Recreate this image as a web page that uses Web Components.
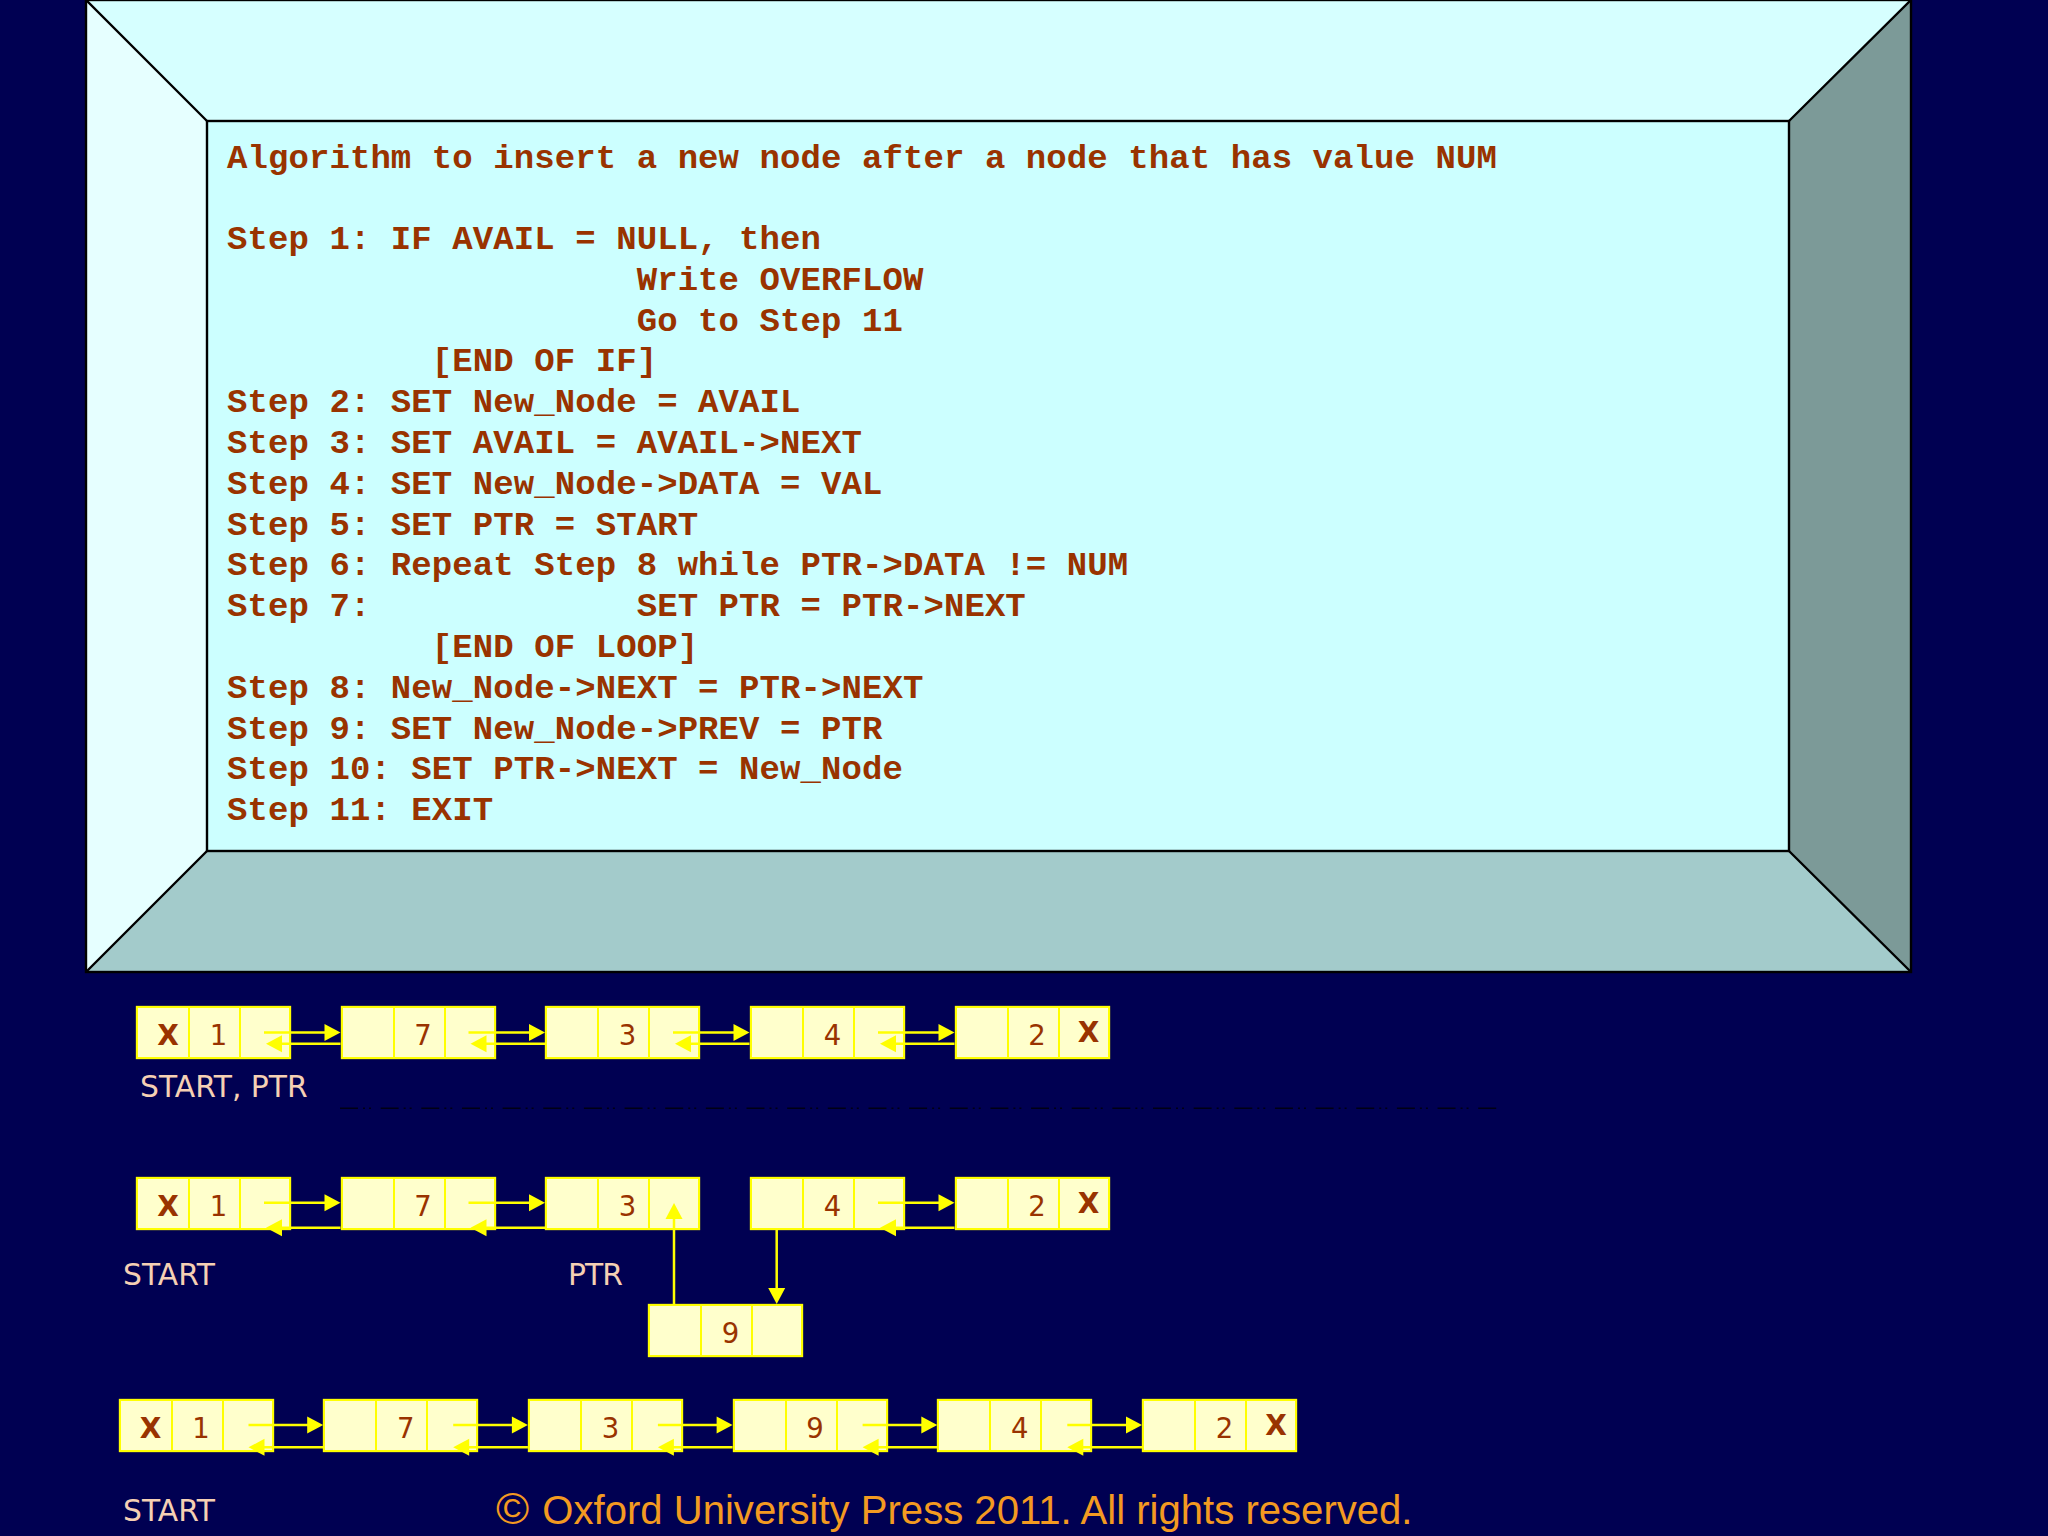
<!DOCTYPE html>
<html>
<head>
<meta charset="utf-8">
<title>Insert after a node</title>
<style>
  html, body { margin: 0; padding: 0; background: #000052; }
  body { width: 2048px; height: 1536px; overflow: hidden; }
</style>
</head>
<body>
<slide-page>
  <bevel-frame>
    <algo-listing>Algorithm to insert a new node after a node that has value NUM

Step 1: IF AVAIL = NULL, then
                    Write OVERFLOW
                    Go to Step 11
          [END OF IF]
Step 2: SET New_Node = AVAIL
Step 3: SET AVAIL = AVAIL-&gt;NEXT
Step 4: SET New_Node-&gt;DATA = VAL
Step 5: SET PTR = START
Step 6: Repeat Step 8 while PTR-&gt;DATA != NUM
Step 7:             SET PTR = PTR-&gt;NEXT
          [END OF LOOP]
Step 8: New_Node-&gt;NEXT = PTR-&gt;NEXT
Step 9: SET New_Node-&gt;PREV = PTR
Step 10: SET PTR-&gt;NEXT = New_Node
Step 11: EXIT</algo-listing>
  </bevel-frame>
  <list-diagram>
    <list-node x="136" y="34" val="1" left="X"></list-node>
    <list-node x="340.5" y="34" val="7"></list-node>
    <list-node x="545" y="34" val="3"></list-node>
    <list-node x="750" y="34" val="4"></list-node>
    <list-node x="954.5" y="34" val="2" right="X"></list-node>
    <diagram-label x="140" y="125.7">START, PTR</diagram-label>

    <list-node x="136" y="205" val="1" left="X"></list-node>
    <list-node x="340.5" y="205" val="7"></list-node>
    <list-node x="545" y="205" val="3"></list-node>
    <list-node x="750" y="205" val="4"></list-node>
    <list-node x="954.5" y="205" val="2" right="X"></list-node>
    <diagram-label x="123" y="313.6">START</diagram-label>
    <diagram-label x="568" y="313.6" style="letter-spacing:-1px">PTR</diagram-label>
    <list-node x="648" y="332" val="9"></list-node>

    <list-node x="118.5" y="427" val="1" left="X"></list-node>
    <list-node x="323.2" y="427" val="7"></list-node>
    <list-node x="527.9" y="427" val="3"></list-node>
    <list-node x="732.6" y="427" val="9"></list-node>
    <list-node x="937.3" y="427" val="4"></list-node>
    <list-node x="1142" y="427" val="2" right="X"></list-node>
    <diagram-label x="123" y="549">START</diagram-label>
    <copyright-note x="496" y="551.7"><span style="font-size:45px;line-height:0;margin-right:2px">©</span> Oxford University Press 2011. All rights reserved.</copyright-note>
  </list-diagram>
</slide-page>

<script>
class SlidePage extends HTMLElement {
  connectedCallback() {
    const root = this.attachShadow({ mode: "open" });
    root.innerHTML = `
      <style>
        :host { display: flex; flex-direction: column; width: 2048px; height: 1536px; }
      </style>
      <slot></slot>`;
  }
}

class BevelFrame extends HTMLElement {
  connectedCallback() {
    const root = this.attachShadow({ mode: "open" });
    root.innerHTML = `
      <style>
        :host {
          display: block;
          position: relative;
          box-sizing: border-box;
          width: 1825px;
          height: 972px;
          margin-left: 86px;
          padding: 138.5px 0 0 141px;
          flex: none;
        }
        svg { position: absolute; left: 0; top: 0; overflow: visible; }
        slot { display: block; position: relative; }
      </style>
      <svg width="1825" height="972" viewBox="0 0 1825 972">
        <polygon points="0,0 1825,0 1703,121 121,121" fill="#d6ffff"/>
        <polygon points="0,0 121,121 121,851 0,972" fill="#e6ffff"/>
        <polygon points="1825,0 1825,972 1703,851 1703,121" fill="#7c9a98"/>
        <polygon points="0,972 121,851 1703,851 1825,972" fill="#a3cbcb"/>
        <rect x="121" y="121" width="1582" height="730" fill="#ccffff"/>
        <g fill="none" stroke="#000" stroke-width="2.4">
          <rect x="0" y="0" width="1825" height="972"/>
          <rect x="121" y="121" width="1582" height="730"/>
          <path d="M0 0L121 121M1825 0L1703 121M0 972L121 851M1825 972L1703 851"/>
        </g>
      </svg>
      <slot></slot>`;
  }
}

class AlgoListing extends HTMLElement {
  connectedCallback() {
    const root = this.attachShadow({ mode: "open" });
    root.innerHTML = `
      <style>
        :host {
          display: block;
          font: bold 34px/40.8px "Liberation Mono", monospace;
          letter-spacing: 0.08px;
          color: #993300;
        }
        slot { display: block; white-space: pre; }
      </style>
      <slot></slot>`;
  }
}

class ListNode extends HTMLElement {
  connectedCallback() {
    const val = this.getAttribute("val") || "";
    const left = this.getAttribute("left") || "";
    const right = this.getAttribute("right") || "";
    this.style.left = this.getAttribute("x") + "px";
    this.style.top = this.getAttribute("y") + "px";
    const root = this.attachShadow({ mode: "open" });
    root.innerHTML = `
      <style>
        :host {
          display: grid;
          grid-template-columns: 50px 51px 1fr;
          position: absolute;
          box-sizing: border-box;
          width: 155px;
          height: 53px;
          border: 2px solid #ffff00;
          box-shadow: 0 0 1px #ffff00;
          background: #ffffcc;
          color: #993300;
          font: 27.5px/1 "DejaVu Sans", sans-serif;
        }
        div {
          display: flex;
          align-items: center;
          justify-content: center;
          padding: 7px 0 0 8px;
          box-sizing: border-box;
          min-width: 0;
        }
        div + div { border-left: 2px solid #ffff00; }
        b { font-size: 28px; margin-left: 2px; }
        div:first-child b { margin-top: -2px; }
        div:last-child b { margin-top: -6px; }
      </style>
      <div><b>${left}</b></div>
      <div>${val}</div>
      <div><b>${right}</b></div>`;
  }
}

class DiagramLabel extends HTMLElement {
  connectedCallback() {
    this.style.left = this.getAttribute("x") + "px";
    this.style.top = this.getAttribute("y") - 31.3 + "px";
    const root = this.attachShadow({ mode: "open" });
    root.innerHTML = `
      <style>
        :host {
          display: block;
          position: absolute;
          white-space: nowrap;
          font: 29.8px/42px "DejaVu Sans", sans-serif;
          color: #f5d0b4;
        }
      </style>
      <slot></slot>`;
  }
}

class CopyrightNote extends HTMLElement {
  connectedCallback() {
    this.style.left = this.getAttribute("x") + "px";
    this.style.top = this.getAttribute("y") - 36.85 + "px";
    const root = this.attachShadow({ mode: "open" });
    root.innerHTML = `
      <style>
        :host {
          display: block;
          position: absolute;
          white-space: nowrap;
          font: 40.1px/46px "Liberation Sans", sans-serif;
          color: #f39a21;
        }
      </style>
      <slot></slot>`;
  }
}

class ListDiagram extends HTMLElement {
  connectedCallback() {
    const root = this.attachShadow({ mode: "open" });
    root.innerHTML = `
      <style>
        :host { display: block; position: relative; width: 2048px; height: 564px; flex: none; }
        svg { position: absolute; left: 0; top: 0; }
      </style>
      <slot></slot>
      <svg width="2048" height="564" viewBox="0 0 2048 564">
        <path d="M340 136.3H1498" fill="none" stroke="#000" stroke-width="1.5" stroke-dasharray="18 5 2 4 2 9.65" opacity="0.75"/>
        ${this.wires()}
      </svg>`;
  }

  // each list row is a set of next/prev pointer pairs, drawn over the nodes
  wires() {
    let out = "";
    const line = (x1, y1, x2, y2) =>
      `<path d="M${x1} ${y1}L${x2} ${y2}" stroke="#ffff00" stroke-width="2.5" fill="none"/>`;
    const head = (pts) => `<polygon points="${pts}" fill="#ffff00"/>`;
    const right = (x1, x2, y) => line(x1, y, x2 - 14, y) + head(`${x2},${y} ${x2 - 16},${y - 8.5} ${x2 - 16},${y + 8.5}`);
    const left = (x1, x2, y) => line(x1, y, x2 + 14, y) + head(`${x2},${y} ${x2 + 16},${y - 8.5} ${x2 + 16},${y + 8.5}`);

    // row 1
    [136, 340.5, 545, 750].forEach((x) => {
      out += right(x + 128, x + 204.5, 60.5);
      out += left(x + 204.5, x + 130, 71.7);
    });
    // row 2, node 3 and node 4 are split for the new node
    [136, 340.5, 750].forEach((x) => {
      out += right(x + 128, x + 204.5, 230.7);
      out += left(x + 204.5, x + 130, 255.7);
    });
    // the new node
    out += line(674, 332, 674, 245) + head("674,231 665.5,247 682.5,247");
    out += line(776.7, 257, 776.7, 318) + head("776.7,332 768.2,316 785.2,316");
    // row 3
    [118.5, 323.2, 527.9, 732.6, 937.3].forEach((x) => {
      out += right(x + 130, x + 204.7, 453);
      out += left(x + 204.7, x + 130, 475.3);
    });
    return out;
  }
}

customElements.define("slide-page", SlidePage);
customElements.define("bevel-frame", BevelFrame);
customElements.define("algo-listing", AlgoListing);
customElements.define("list-node", ListNode);
customElements.define("diagram-label", DiagramLabel);
customElements.define("copyright-note", CopyrightNote);
customElements.define("list-diagram", ListDiagram);
</script>
</body>
</html>
